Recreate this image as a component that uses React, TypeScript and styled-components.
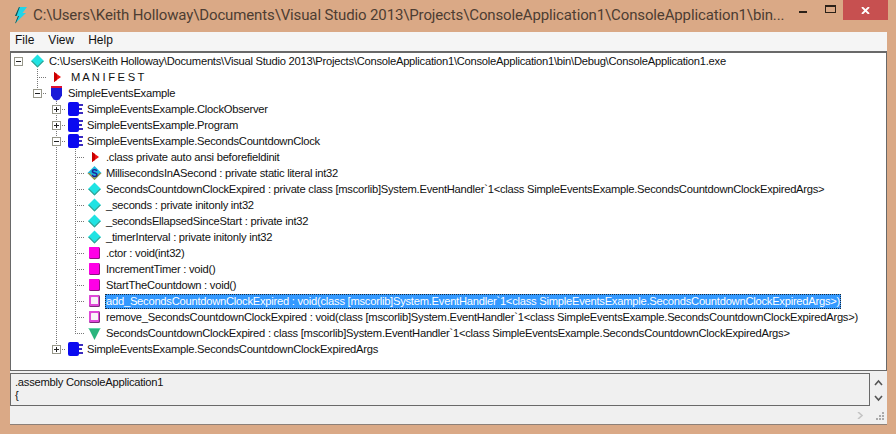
import React from "react";
import styled, { createGlobalStyle, css } from "styled-components";

const Global = createGlobalStyle`
  html, body { margin: 0; padding: 0; background: #daa986; }
  #root { width: 896px; height: 434px; overflow: hidden; }
`;

const Window = styled.div`
  width: 896px;
  height: 434px;
  display: flex;
  flex-direction: column;
  background: #daa986;
  font-family: "Liberation Sans", sans-serif;
  color: #111;
  overflow: hidden;
`;

const TitleBar = styled.div`
  height: 32px;
  flex: none;
  display: flex;
  align-items: flex-start;
  padding-left: 13px;
`;

const AppIcon = styled.svg`
  width: 15px;
  height: 18px;
  margin-top: 6px;
  flex: none;
`;

const TitleText = styled.div`
  margin-left: 5px;
  margin-top: 3px;
  width: 751px;
  font-family: "Roboto", sans-serif;
  font-size: 15px;
  letter-spacing: -0.13px;
  line-height: 24px;
  color: #4d3d32;
  white-space: nowrap;
`;

const Controls = styled.div`
  display: flex;
  align-items: flex-start;
  margin-left: 8px;
`;

const ControlBtn = styled.div<{ $w: number; $close?: boolean }>`
  width: ${(p) => p.$w}px;
  height: 20px;
  display: flex;
  align-items: center;
  justify-content: center;
  ${(p) =>
    p.$close &&
    css`
      background: #c75050;
    `}
`;

const MinGlyph = styled.div`
  width: 8px;
  height: 2px;
  background: #2b2118;
  margin-top: 4px;
`;

const MaxGlyph = styled.div`
  width: 9px;
  height: 5px;
  border: 1px solid #2b2118;
  border-top-width: 2px;
  margin: -2px 0 0 3px;
`;

const Client = styled.div`
  margin: 0 9px 0 10px;
  height: 392px;
  flex: none;
  background: #f0f0f0;
  display: flex;
  flex-direction: column;
  border-bottom: 1px solid #8d8078;
`;

const MenuBar = styled.div`
  height: 19px;
  flex: none;
  display: flex;
  padding-left: 5px;
  gap: 14px;
  font-size: 12px;
  line-height: 17px;
  background: #f5f5f5;
`;

const MenuItem = styled.span``;

const Tree = styled.div`
  height: 320px;
  flex: none;
  background: #fff;
  border-top: 2px solid #696969;
  border-left: 1px solid #696969;
  border-right: 1px solid #696969;
  border-bottom: 1px solid #696969;
  box-sizing: border-box;
  overflow: hidden;
`;

const Row = styled.div`
  display: flex;
  height: 16px;
  margin-left: -2px;
  align-items: center;
  white-space: nowrap;
`;

type Line = "none" | "through" | "tee" | "end";

const dotsV = "repeating-linear-gradient(to bottom, #777 0 1px, transparent 1px 2px)";
const dotsH = "repeating-linear-gradient(to right, #777 0 1px, transparent 1px 2px)";

const Guide = styled.div<{ $line: Line }>`
  width: 19px;
  height: 16px;
  flex: none;
  display: flex;
  align-items: center;
  justify-content: center;
  background-repeat: no-repeat;
  ${(p) =>
    p.$line === "through" &&
    css`
      background-image: ${dotsV};
      background-size: 1px 16px;
      background-position: 9px 0;
    `}
  ${(p) =>
    p.$line === "tee" &&
    css`
      background-image: ${dotsV}, ${dotsH};
      background-size: 1px 16px, 10px 1px;
      background-position: 9px 0, 9px 8px;
    `}
  ${(p) =>
    p.$line === "end" &&
    css`
      background-image: ${dotsV}, ${dotsH};
      background-size: 1px 8px, 10px 1px;
      background-position: 9px 0, 9px 8px;
    `}
`;

const Box = styled.div<{ $open: boolean }>`
  width: 9px;
  height: 9px;
  box-sizing: border-box;
  border: 1px solid #97978a;
  background: #fff;
  display: flex;
  align-items: center;
  justify-content: center;
  position: relative;
  &::before {
    content: "";
    width: 5px;
    height: 1px;
    background: #222;
  }
  ${(p) =>
    !p.$open &&
    css`
      &::after {
        content: "";
        position: absolute;
        left: 3px;
        top: 1px;
        width: 1px;
        height: 5px;
        background: #222;
      }
    `}
`;

const IconCell = styled.div`
  width: 19px;
  height: 16px;
  flex: none;
  display: flex;
  align-items: center;
  justify-content: center;
  background: #fff;
`;

const Glyph = styled.svg`
  width: 17px;
  height: 16px;
  display: block;
`;

const Label = styled.span<{ $selected?: boolean; $gap?: number }>`
  margin-left: ${(p) => p.$gap ?? 1}px;
  font-size: 11.2px;
  letter-spacing: -0.25px;
  line-height: 15px;
  height: 15px;
  padding: 0 1px;
  color: #111;
  ${(p) =>
    p.$selected &&
    css`
      background: #3399ff;
      color: #fff;
      outline: 1px dotted #1b2b3b;
      outline-offset: -1px;
    `}
`;

const Bottom = styled.div`
  flex: 1;
  min-height: 0;
  display: flex;
  flex-direction: column;
  padding-top: 2px;
`;

const CodeRow = styled.div`
  height: 33px;
  flex: none;
  display: flex;
`;

const Code = styled.div`
  width: 860px;
  flex: none;
  box-sizing: border-box;
  background: #f0f0f0;
  border: 1px solid #696969;
  padding: 2px 0 0 4px;
  font-size: 11.2px;
  letter-spacing: -0.25px;
  line-height: 13px;
  color: #111;
  overflow: hidden;
`;

const VScroll = styled.div`
  flex: 1;
  display: flex;
  flex-direction: column;
  align-items: center;
  justify-content: space-between;
  padding: 6px 0 4px;
`;

const HScroll = styled.div`
  flex: 1;
  display: flex;
  align-items: center;
  justify-content: flex-end;
  padding-right: 2px;
`;

const Grip = styled.svg`
  width: 12px;
  height: 12px;
  margin-left: 8px;
  margin-top: 4px;
`;

const Tiny = styled.svg`
  width: 9px;
  height: 7px;
  display: block;
`;

const Diamond = () => (
  <Glyph viewBox="0 0 17 16">
    <path d="M8.5 1.5 15 8 8.5 14.5 2 8Z" fill="#1fe3e3" />
    <path d="M2 8 8.5 14.5 15 8 13.5 8 8.5 13 3.5 8Z" fill="#3c9c8c" />
  </Glyph>
);
const RedArrow = () => (
  <Glyph viewBox="0 0 17 16">
    <path d="M6 3 13 8 6 13Z" fill="#ee1111" />
    <path d="M6 3 9 5V11L6 13Z" fill="#c80000" />
  </Glyph>
);
const Shield = () => (
  <Glyph viewBox="0 0 17 16">
    <path d="M3 3H14V10.5L11.5 14.5 8.5 15.5 5.5 14.5 3 10.5Z" fill="#1a1ad8" />
    <rect x="3" y="1" width="11" height="2" fill="#dd1133" />
  </Glyph>
);
const ClassIcon = () => (
  <Glyph viewBox="0 0 17 16">
    <rect x="1" y="1" width="11" height="14" rx="2" fill="#0a0af0" />
    <path d="M12 3H16V5H12ZM12 7H15V9H12ZM12 11H16V13H12Z" fill="#3a2ac0" />
  </Glyph>
);
const StaticField = () => (
  <Glyph viewBox="0 0 17 16">
    <path d="M8.5 1 15.5 8 8.5 15 1.5 8Z" fill="#1fb8e0" />
    <path d="M1.5 8 8.5 15 15.5 8 13.5 8 8.5 13 3.5 8Z" fill="#a09040" />
    <text x="8.5" y="11.5" fontSize="10" fontWeight="700" fill="#1d1d9a" textAnchor="middle" fontFamily="Liberation Sans">S</text>
  </Glyph>
);
const Method = () => (
  <Glyph viewBox="0 0 17 16">
    <rect x="3" y="2" width="11" height="12" rx="1.5" fill="#8c1080" />
    <rect x="3" y="2" width="10" height="11" rx="1" fill="#ff00e6" />
  </Glyph>
);
const MethodHollow = () => (
  <Glyph viewBox="0 0 17 16">
    <rect x="3" y="2" width="11" height="12" rx="1.5" fill="#7a2a78" />
    <rect x="3" y="2" width="10" height="11" rx="1" fill="#e048d8" />
    <rect x="5" y="4" width="7" height="7" rx="0.5" fill="#f8f2f8" />
  </Glyph>
);
const GreenDown = () => (
  <Glyph viewBox="0 0 17 16">
    <path d="M2.5 3H14.5L8.5 15Z" fill="#2ab57d" />
    <path d="M2.5 3H14.5L14 4H3Z" fill="#60d8a8" />
  </Glyph>
);

type NodeDef = {
  guides: Line[];
  box?: "open" | "closed";
  connector: Line;
  icon: React.ReactNode;
  text: string;
  selected?: boolean;
  gap?: number;
};

const member = (icon: React.ReactNode, text: string, last = false, selected = false): NodeDef => ({
  guides: ["none", "none", "through"],
  connector: last ? "end" : "tee",
  icon,
  text,
  selected,
});

const nodes: NodeDef[] = [
  { guides: [], box: "open", connector: "none", icon: <Diamond />, text: "C:\\Users\\Keith Holloway\\Documents\\Visual Studio 2013\\Projects\\ConsoleApplication1\\ConsoleApplication1\\bin\\Debug\\ConsoleApplication1.exe" },
  { guides: ["none"], connector: "tee", icon: <RedArrow />, text: "M A N I F E S T", gap: 4 },
  { guides: ["none"], box: "open", connector: "end", icon: <Shield />, text: "SimpleEventsExample" },
  { guides: ["none", "none"], box: "closed", connector: "tee", icon: <ClassIcon />, text: "SimpleEventsExample.ClockObserver" },
  { guides: ["none", "none"], box: "closed", connector: "tee", icon: <ClassIcon />, text: "SimpleEventsExample.Program" },
  { guides: ["none", "none"], box: "open", connector: "tee", icon: <ClassIcon />, text: "SimpleEventsExample.SecondsCountdownClock" },
  member(<RedArrow />, ".class private auto ansi beforefieldinit"),
  member(<StaticField />, "MillisecondsInASecond : private static literal int32"),
  member(<Diamond />, "SecondsCountdownClockExpired : private class [mscorlib]System.EventHandler`1<class SimpleEventsExample.SecondsCountdownClockExpiredArgs>"),
  member(<Diamond />, "_seconds : private initonly int32"),
  member(<Diamond />, "_secondsEllapsedSinceStart : private int32"),
  member(<Diamond />, "_timerInterval : private initonly int32"),
  member(<Method />, ".ctor : void(int32)"),
  member(<Method />, "IncrementTimer : void()"),
  member(<Method />, "StartTheCountdown : void()"),
  member(<MethodHollow />, "add_SecondsCountdownClockExpired : void(class [mscorlib]System.EventHandler`1<class SimpleEventsExample.SecondsCountdownClockExpiredArgs>)", false, true),
  member(<MethodHollow />, "remove_SecondsCountdownClockExpired : void(class [mscorlib]System.EventHandler`1<class SimpleEventsExample.SecondsCountdownClockExpiredArgs>)"),
  member(<GreenDown />, "SecondsCountdownClockExpired : class [mscorlib]System.EventHandler`1<class SimpleEventsExample.SecondsCountdownClockExpiredArgs>", true),
  { guides: ["none", "none"], box: "closed", connector: "end", icon: <ClassIcon />, text: "SimpleEventsExample.SecondsCountdownClockExpiredArgs" },
];

export default function App() {
  return (
    <Window>
      <Global />
      <TitleBar>
        <AppIcon viewBox="0 0 15 18">
          <path d="M6 1H14L9.5 7H13L2 17.5 5 10H2Z" fill="#22d4e8" />
          <path d="M6 1 2 10H3.5L6.8 1ZM5 10 2 17.5 3.2 16.4 6 10Z" fill="#1e4a44" />
        </AppIcon>
        <TitleText>C:\Users\Keith Holloway\Documents\Visual Studio 2013\Projects\ConsoleApplication1\ConsoleApplication1\bin...</TitleText>
        <Controls>
          <ControlBtn $w={22}><MinGlyph /></ControlBtn>
          <ControlBtn $w={29}><MaxGlyph /></ControlBtn>
          <ControlBtn $w={45} $close>
            <Tiny viewBox="0 0 9 7" fill="none" stroke="#fff" strokeWidth="1.8"><path d="M1 0 8 7M8 0 1 7" /></Tiny>
          </ControlBtn>
        </Controls>
      </TitleBar>
      <Client>
        <MenuBar>
          <MenuItem>File</MenuItem>
          <MenuItem>View</MenuItem>
          <MenuItem>Help</MenuItem>
        </MenuBar>
        <Tree>
          {nodes.map((n, i) => (
            <Row key={i}>
              {n.guides.map((g, j) => (
                <Guide key={j} $line={g} />
              ))}
              <Guide $line={n.connector}>
                {n.box && <Box $open={n.box === "open"} />}
              </Guide>
              <IconCell>{n.icon}</IconCell>
              <Label $selected={n.selected} $gap={n.gap}>{n.text}</Label>
            </Row>
          ))}
        </Tree>
        <Bottom>
          <CodeRow>
            <Code>
              .assembly ConsoleApplication1
              <br />
              {"{"}
            </Code>
            <VScroll>
              <Tiny viewBox="0 0 9 7" fill="none" stroke="#555" strokeWidth="1.6"><path d="M1 6 4.5 2 8 6" /></Tiny>
              <Tiny viewBox="0 0 9 7" fill="none" stroke="#555" strokeWidth="1.6"><path d="M1 1 4.5 5 8 1" /></Tiny>
            </VScroll>
          </CodeRow>
          <HScroll>
            <Tiny viewBox="0 0 9 7" fill="none" stroke="#c4c4c4" strokeWidth="1.6"><path d="M2 0 6 3.5 2 7" /></Tiny>
            <Grip viewBox="0 0 12 12" fill="#aaa">
              <path d="M9 1h2v2H9zM6 4h2v2H6zM9 4h2v2H9zM3 7h2v2H3zM6 7h2v2H6zM9 7h2v2H9z" />
            </Grip>
          </HScroll>
        </Bottom>
      </Client>
    </Window>
  );
}
